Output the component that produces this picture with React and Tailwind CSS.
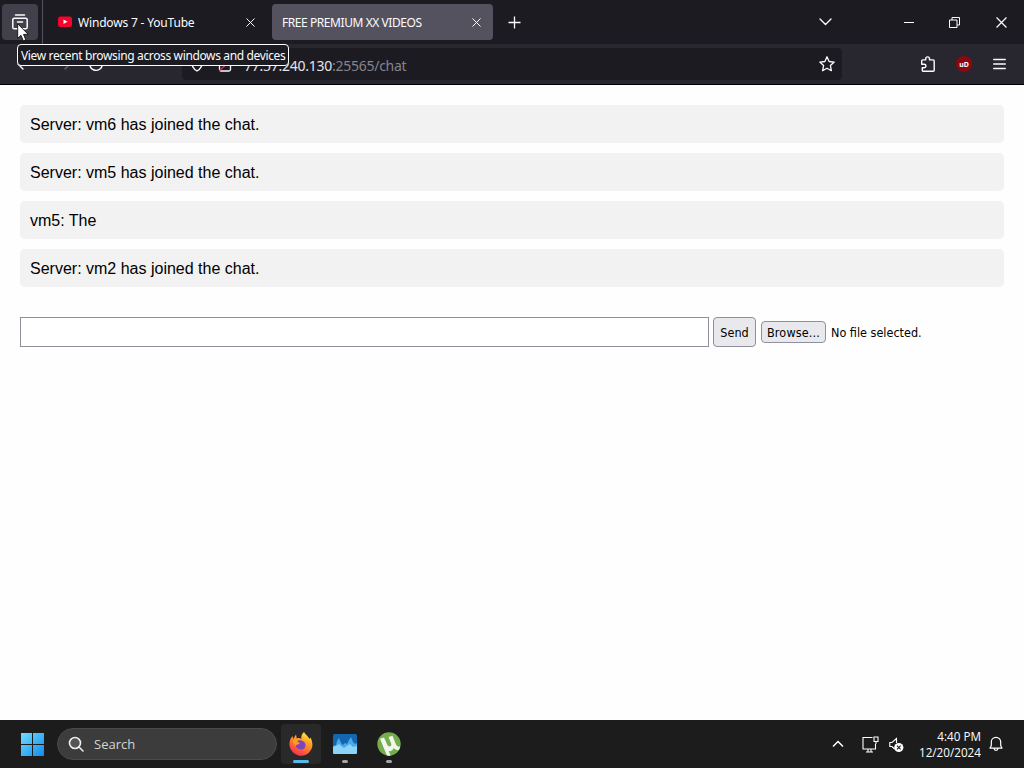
const messages = [
    { id: 1, text: 'Server: vm6 has joined the chat.' },
    { id: 2, text: 'Server: vm5 has joined the chat.' },
    { id: 3, text: 'vm5: The' },
    { id: 4, text: 'Server: vm2 has joined the chat.' }
];

function CloseIcon({ size = 9 }) {
    return (
        <svg width={size} height={size} viewBox="0 0 10 10" fill="none" stroke="currentColor" strokeWidth="1.1">
            <path d="M.5.5l9 9M9.5.5l-9 9" />
        </svg>
    );
}

function TabBar() {
    return (
        <div className="flex h-11 items-center bg-[#1c1b22] text-[#fbfbfe]">
            {/* Recent browsing */}
            <div className="flex h-full w-[43px] items-center border-r border-[#55545e] pl-0.5">
                <div className="flex h-9 w-9 items-center justify-center rounded bg-[#42414b]">
                    <svg width="18" height="18" viewBox="0 0 18 18" fill="none" stroke="currentColor" strokeWidth="1.5" strokeLinecap="round">
                        <path d="M4.5 2h9" />
                        <rect x="1.8" y="5.2" width="14.4" height="10.6" rx="1.6" />
                        <path d="M6.5 9h5" />
                    </svg>
                </div>
            </div>

            {/* Inactive tab */}
            <div className="flex w-[229px] items-center pl-[15px] pr-[17px]">
                <svg width="14" height="12" viewBox="0 0 14 12" className="mr-1.5 shrink-0">
                    <rect y="0.5" width="14" height="10.5" rx="2.5" fill="#f5052e" />
                    <path d="M5.5 3.5V8l4-2.25z" fill="#fff" />
                </svg>
                <span className="flex-1 whitespace-nowrap pt-0.5 text-[12px] leading-4 tracking-[-0.18px]">Windows 7 - YouTube</span>
                <CloseIcon />
            </div>

            {/* Selected tab */}
            <div className="flex h-9 w-[221px] items-center rounded bg-[#54525f] pl-2.5 pr-3">
                <span className="flex-1 whitespace-nowrap pt-0.5 text-[12px] leading-4 tracking-[-0.43px]">FREE PREMIUM XX VIDEOS</span>
                <CloseIcon />
            </div>
            <svg width="13" height="13" viewBox="0 0 13 13" fill="none" stroke="currentColor" strokeWidth="1.3" className="ml-[15px]">
                <path d="M6.5.5v12M.5 6.5h12" />
            </svg>

            {/* Window controls */}
            <div className="ml-auto flex items-center pr-[17px]">
                <svg width="13" height="8" viewBox="0 0 13 8" fill="none" stroke="currentColor" strokeWidth="1.4" strokeLinecap="round" strokeLinejoin="round" className="mr-[72px]">
                    <path d="M1 1l5.5 5.5L12 1" />
                </svg>
                <div className="mr-[35px] h-px w-2.5 bg-white" />
                <svg width="11" height="11" viewBox="0 0 11 11" fill="none" stroke="currentColor" className="mr-9">
                    <path d="M.5 3h7.5v7.5H.5zM3 3V.5h7.5V8H8" />
                </svg>
                <CloseIcon size={11} />
            </div>
        </div>
    );
}

function NavBar() {
    return (
        <div className="flex h-[41px] items-center border-b border-black bg-[#28272f] text-[#fbfbfe]">
            <div className="flex w-[182px] items-center pl-4">
                <svg width="16" height="16" viewBox="0 0 16 16" fill="none" stroke="currentColor" strokeWidth="1.4" strokeLinecap="round">
                    <path d="M14 8H2M7 3L2 8l5 5" />
                </svg>
                <svg width="16" height="16" viewBox="0 0 16 16" fill="none" stroke="#65646e" strokeWidth="1.4" strokeLinecap="round" className="ml-6">
                    <path d="M2 8h12M9 3l5 5-5 5" />
                </svg>
                <svg width="16" height="16" viewBox="0 0 16 16" fill="none" stroke="currentColor" strokeWidth="1.4" className="ml-4">
                    <path d="M13.5 5A6.3 6.3 0 1 0 14.3 8M14 1.5V5.5h-4" />
                </svg>
            </div>

            {/* Address field */}
            <div className="flex h-8 w-[660px] items-center rounded bg-[#1c1b22] pl-2 pr-[7px]">
                <svg width="14" height="15" viewBox="0 0 14 15" fill="none" stroke="currentColor" strokeWidth="1.3">
                    <path d="M7 1l5.5 2c.3 5-1.3 8.6-5.5 11C2.8 11.6 1.2 8 1.5 3z" />
                </svg>
                <svg width="14" height="15" viewBox="0 0 14 15" fill="none" stroke="currentColor" strokeWidth="1.3" className="ml-3.5 mr-3">
                    <rect x="1.5" y="6.5" width="11" height="7.5" rx="1.5" />
                    <path d="M4 6.5V4a3 3 0 0 1 6 0v2.5" />
                    <path d="M1 14L13 3" stroke="#e22850" />
                </svg>
                <span className="flex-1 whitespace-nowrap pt-[3px] text-[14px] leading-5 tracking-[-0.26px] text-[#e4e4e8]">
                    77.57.240.130<span className="text-[#85848e]">:25565/chat</span>
                </span>
                <svg width="16" height="16" viewBox="0 0 16 16" fill="none" stroke="currentColor" strokeWidth="1.3" strokeLinejoin="round">
                    <path d="M8 .8l2.1 4.7 5.1.6-3.8 3.5 1 5.1L8 12.2l-4.4 2.5 1-5.1L.8 6.1l5.1-.6z" />
                </svg>
            </div>

            <div className="ml-auto flex items-center pr-[18px]">
                <svg width="16" height="16" viewBox="0 0 16 16" fill="none" stroke="currentColor" strokeWidth="1.4" strokeLinejoin="round" className="mr-5">
                    <path d="M5.7 3.9V2.8a1.9 1.9 0 0 1 3.8 0v1.1h3.7a1 1 0 0 1 1 1v9.3a1 1 0 0 1-1 1H3.3a1 1 0 0 1-1-1v-2.4h1.9a1.7 1.7 0 0 0 0-3.5H1.7V4.9a1 1 0 0 1 1-1z" />
                </svg>
                <div className="mr-[21px] flex h-4 w-4 items-center justify-center rounded-full bg-[#8d0710] text-[7px] font-bold leading-none">
                    <span>uD</span>
                </div>
                <svg width="13" height="12" viewBox="0 0 13 12" fill="none" stroke="currentColor" strokeWidth="1.3" strokeLinecap="round">
                    <path d="M.7 1.5h11.6M.7 6h11.6M.7 10.5h11.6" />
                </svg>
            </div>
        </div>
    );
}

function ChatPage() {
    return (
        <div className="flex-1 bg-[#fefefe] px-5 pt-5">
            <div className="flex flex-col gap-2.5 font-['Liberation_Sans',Arial,sans-serif] text-base text-black">
                {messages.map((message) => (
                    <div key={message.id} className="h-[38px] rounded-[5px] bg-[#f2f2f2] px-2.5 leading-[39px]">
                        {message.text}
                    </div>
                ))}
            </div>

            {/* Message form */}
            <div className="mt-[30px] flex items-center font-['DejaVu_Sans_Condensed','Noto_Sans',sans-serif] text-[12.5px] text-black">
                <input type="text" className="h-[30px] w-[689px] border border-[#8f8f9d] bg-white px-2 outline-none" />
                <button className="ml-1 h-[30px] w-[43px] rounded border border-[#8f8f9d] bg-[#e9e9ed] pt-0.5">Send</button>
                <button className="ml-[5px] flex h-[22px] w-[65px] items-center justify-center rounded border border-[#8f8f9d] bg-[#e9e9ed] pt-0.5 tracking-[0.15px]">Browse...</button>
                <span className="ml-[5px] whitespace-nowrap pt-0.5">No file selected.</span>
            </div>
        </div>
    );
}

function FirefoxLogo() {
    return (
        <svg width="26" height="26" viewBox="0 0 26 26">
            <defs>
                <linearGradient id="flame" x1="0.8" y1="0" x2="0.3" y2="1">
                    <stop offset="0" stopColor="#fff04a" />
                    <stop offset="0.4" stopColor="#ff9a24" />
                    <stop offset="1" stopColor="#f52b51" />
                </linearGradient>
            </defs>
            <path d="M16 1c1.2 2.7 4 3.8 5.5 7l1-1.5c2 4 2.8 8.5.6 12.3A11.5 11.5 0 0 1 1.6 15C1 11 2.3 7.5 4.5 5l.7 3L8 3.5l.8 4c1.7-.7 3.2-.4 4.5.4C13 5 14 2.5 16 1z" fill="url(#flame)" />
            <path d="M9 10c3-2 8 0 8.5 3.5.4 3.5-2.5 5.5-5.3 5-3-.4-5.2-3-4.2-5.5 1 1 2.5.6 4-.6L9 10z" fill="#7b45bd" />
            <path d="M5 10c1.5-2 4-2.5 6-1.5-.5 1-1.5 1.4-2.5 1.7l3 1.5c-1.2 1.5-3 1.3-3.5 3.2-1.4-1-3-2.5-3-4.9z" fill="#ff9b24" />
        </svg>
    );
}

function MonitorLogo() {
    return (
        <svg width="24" height="20" viewBox="0 0 24 20">
            <rect width="24" height="20" rx="1.5" fill="#1267b0" />
            <path d="M0 12l3-1 1-4 2-3 2 5 2 2 2-2 2 1 2-4 2-3 2 5 2 2 2-1v9.5a1.5 1.5 0 0 1-1.5 1.5h-21A1.5 1.5 0 0 1 0 18.5z" fill="#4aa8e8" />
            <path d="M0 13l3-1 3-2 2 2 3 2 3-2 3-2 3 3 4-1v6.5A1.5 1.5 0 0 1 22.5 20h-21A1.5 1.5 0 0 1 0 18.5z" fill="#8bd3f7" />
        </svg>
    );
}

function TorrentLogo() {
    return (
        <svg width="24" height="24" viewBox="0 0 24 24">
            <defs>
                <clipPath id="disc">
                    <circle cx="12" cy="12" r="11.7" />
                </clipPath>
            </defs>
            <circle cx="12" cy="12" r="11.7" fill="#73ad4d" />
            <g clipPath="url(#disc)">
                <path d="M3 6.8l4-1.3 3.3 7.3c1.4 2.9 4.8 1.5 3.8-1.3L11.5 5l4-1.2 3.3 8.2c.9 2.2 2.2 3 4.2 2.5l-.5 3.3c-2.8.6-4.6 0-5.8-1.7-.7 2.3-2.6 3.4-5 3l2.5 5.9H10.5z" fill="#f2f7ee" />
            </g>
        </svg>
    );
}

function Taskbar() {
    return (
        <div className="flex h-12 items-center bg-[#1c1c1c] font-['Open_Sans','Noto_Sans',sans-serif] text-white">
            <svg width="24" height="24" viewBox="0 0 24 24" className="ml-5">
                <defs>
                    <linearGradient id="win" x1="0" y1="0" x2="1" y2="1">
                        <stop offset="0" stopColor="#70dcff" />
                        <stop offset="1" stopColor="#118bea" />
                    </linearGradient>
                </defs>
                <path d="M1 1h11v11H1zM13 1h11v11H13zM1 13h11v11H1zM13 13h11v11H13z" fill="url(#win)" />
            </svg>

            <div className="ml-[13px] flex h-8 w-[220px] items-center rounded-full border border-[#4a4a4a] bg-[#3c3c3c] pl-2.5">
                <svg width="16" height="16" viewBox="0 0 16 16" fill="none" stroke="#eee" strokeWidth="1.6" strokeLinecap="round">
                    <circle cx="7" cy="7" r="5.5" fill="#555" />
                    <path d="M11 11l4 4" />
                </svg>
                <span className="ml-2.5 pt-px text-[13px] text-[#d5d5d5]">Search</span>
            </div>

            {/* Running apps */}
            <div className="ml-1 flex h-10 w-10 flex-col items-center rounded bg-[#292929] pt-[7px]">
                <FirefoxLogo />
                <div className="mt-[3px] h-[3px] w-4 rounded-full bg-[#58b9e9]" />
            </div>
            <div className="ml-1 flex h-10 w-10 flex-col items-center pt-2.5">
                <MonitorLogo />
                <div className="mt-1.5 h-[3px] w-1.5 rounded-full bg-[#a5a5a5]" />
            </div>
            <div className="ml-1 flex h-10 w-10 flex-col items-center pt-2">
                <TorrentLogo />
                <div className="mt-1 h-[3px] w-1.5 rounded-full bg-[#a5a5a5]" />
            </div>

            {/* System tray */}
            <div className="ml-auto flex items-center pr-[21px]">
                <svg width="12" height="8" viewBox="0 0 12 8" fill="none" stroke="currentColor" strokeWidth="1.5" className="mr-[18px]">
                    <path d="M1 6.5l5-5 5 5" />
                </svg>
                <svg width="17" height="17" viewBox="0 0 17 17" fill="none" stroke="currentColor" strokeWidth="1.1" className="mr-2.5">
                    <path d="M10.5 1.5H1v11.5h12.5V8M4 16h7M6 13v3M9 13v3M12 1h4v4.5h-4zM14 5.5V8" />
                </svg>
                <svg width="15" height="16" viewBox="0 0 15 16" fill="none" stroke="currentColor" strokeWidth="1.1" className="mt-0.5 mr-[15px]">
                    <path d="M5.5 12L3 9.5H.8v-4H3L7.5 1.5V6" />
                    <circle cx="9.8" cy="10.5" r="4.6" fill="currentColor" stroke="none" />
                    <path d="M8 8.7l3.6 3.6m0-3.6L8 12.3" stroke="#1c1c1c" />
                </svg>
                <div className="mr-2 pb-px text-right text-[11.7px] leading-4 whitespace-nowrap">
                    <p>4:40 PM</p>
                    <p>12/20/2024</p>
                </div>
                <svg width="14" height="16" viewBox="0 0 14 16" fill="none" stroke="currentColor" strokeWidth="1.2" strokeLinejoin="round">
                    <path d="M2.3 6a4.7 4.7 0 0 1 9.4 0v3.5l1.3 2.7H1l1.3-2.7zM5 12.5c.3 2.5 3.7 2.5 4 0" />
                </svg>
            </div>
        </div>
    );
}

export default function App() {
    return (
        <div className="relative flex h-screen w-full flex-col overflow-hidden font-['Noto_Sans',sans-serif]">
            <TabBar />
            <NavBar />
            <ChatPage />
            <Taskbar />

            {/* Tooltip for the hovered button */}
            <div className="absolute left-[17px] top-11 flex h-[22px] w-[272px] items-center rounded border border-white bg-[#1c1b22] pt-0.5 pl-[3px] text-[12px] tracking-[-0.36px] whitespace-nowrap text-[#fbfbfe]">
                View recent browsing across windows and devices
            </div>
            <svg width="13" height="19" viewBox="0 0 13 19" className="absolute left-[17px] top-[23px]">
                <path d="M.7.8v14.5l3.3-3 2.3 5.5 2.5-1-2.3-5.4h4.7z" fill="#fff" stroke="#000" strokeWidth=".8" />
            </svg>
        </div>
    );
}
